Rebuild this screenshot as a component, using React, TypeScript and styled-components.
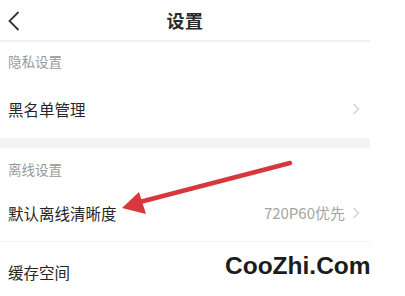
import styled, { createGlobalStyle } from 'styled-components'

const GlobalStyle = createGlobalStyle`
    *, *::before, *::after {
        box-sizing: border-box;
    }
    html, body {
        margin: 0;
        padding: 0;
        background: #ffffff;
    }
    body {
        font-family: 'Noto Sans CJK SC', 'Noto Sans', sans-serif;
        color: #222222;
    }
`

const Page = styled.div`
    position: relative;
    width: 405px;
    height: 296px;
    overflow: hidden;
    background: #ffffff;
`

const Screen = styled.div`
    width: 370px;
    display: flex;
    flex-direction: column;
`

const Header = styled.div`
    height: 42px;
    display: grid;
    grid-template-columns: 40px 1fr 40px;
    align-items: center;
    border-bottom: 2px solid #f0f0f0;
`

const BackButton = styled.div`
    display: flex;
    align-items: center;
    padding-left: 8px;
    padding-top: 2px;
`

const Title = styled.div`
    text-align: center;
    font-size: 18px;
    font-weight: 700;
    color: #2a2a2a;
    letter-spacing: 0.5px;
`

const SectionTitle = styled.div<{ h: number }>`
    height: ${p => p.h}px;
    display: flex;
    align-items: center;
    padding-left: 8px;
    font-size: 13.5px;
    color: #9a9a9a;
`

const Row = styled.div<{ h: number; lift?: number; divider?: boolean }>`
    height: ${p => p.h}px;
    display: flex;
    align-items: center;
    padding: 0 10px ${p => p.lift || 0}px 8px;
    border-bottom: ${p => (p.divider ? '1px solid #f0f0f0' : 'none')};
`

const Label = styled.div`
    flex: 1;
    font-size: 15.5px;
    color: #262626;
`

const Value = styled.div`
    font-size: 15px;
    color: #a5a5a5;
    margin-right: 7px;
`

const Band = styled.div`
    height: 10px;
    background: #f4f4f4;
`

const Watermark = styled.div`
    position: absolute;
    left: 223px;
    top: 252px;
    padding: 0 2px;
    font-family: 'Liberation Sans', Arial, sans-serif;
    font-weight: 700;
    font-size: 24.5px;
    color: #1c1c1c;
`

const ArrowLayer = styled.svg`
    position: absolute;
    left: 0;
    top: 0;
    pointer-events: none;
`

const Chevron = () => (
    <svg width='8' height='12' viewBox='0 0 8 12'>
        <polyline
            points='1.5,1 6.5,6 1.5,11'
            fill='none'
            stroke='#cfcfcf'
            strokeWidth='1.3'
        />
    </svg>
)

const App = () => {
    return (
        <Page>
            <GlobalStyle />
            <Screen>
                <Header>
                    <BackButton>
                        <svg width='12' height='20' viewBox='0 0 12 20'>
                            <polyline
                                points='10.5,1 1.5,10 10.5,19'
                                fill='none'
                                stroke='#333'
                                strokeWidth='1.8'
                            />
                        </svg>
                    </BackButton>
                    <Title>设置</Title>
                    <div />
                </Header>
                <SectionTitle h={38}>隐私设置</SectionTitle>
                <Row h={58}>
                    <Label>黑名单管理</Label>
                    <Chevron />
                </Row>
                <Band />
                <SectionTitle h={41}>离线设置</SectionTitle>
                <Row h={53} lift={5} divider>
                    <Label>默认离线清晰度</Label>
                    <Value>720P60优先</Value>
                    <Chevron />
                </Row>
                <Row h={60}>
                    <Label>缓存空间</Label>
                </Row>
            </Screen>

            <ArrowLayer width='405' height='296'>
                <line
                    x1='290'
                    y1='163'
                    x2='136'
                    y2='203'
                    stroke='#d8383b'
                    strokeWidth='4.5'
                    strokeLinecap='round'
                />
                <polygon points='122,208 139,192 146,214' fill='#d8383b' />
            </ArrowLayer>

            <Watermark>CooZhi.Com</Watermark>
        </Page>
    )
}

export default App
